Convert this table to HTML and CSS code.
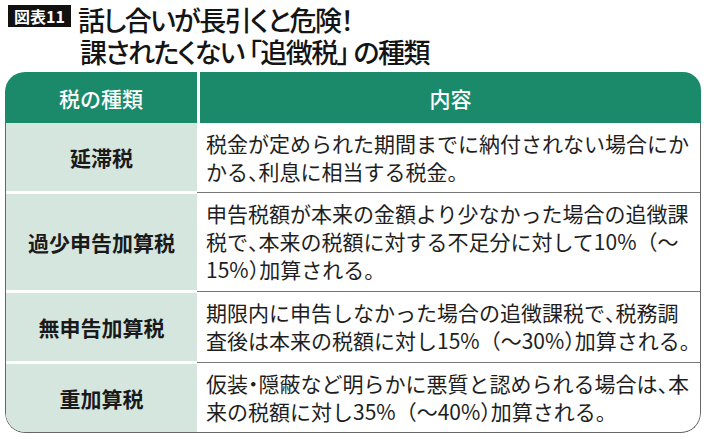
FILE: index.html
```html
<!DOCTYPE html>
<html lang="ja">
<head>
<meta charset="utf-8">
<title>図表11 追徴税の種類</title>
<link rel="stylesheet" href="styles.css">
</head>
<body>
<div class="page">
  <header class="title">
    <span class="tag">図表11</span>
    <h1 class="heading"><span>話し合いが長引くと危険！</span><span>課されたくない 「追徴税」 の種類</span></h1>
  </header>
  <div class="table">
    <div class="thead">
      <div class="th">税の種類</div>
      <div class="th">内容</div>
    </div>
    <div class="tbody">
      <div class="row">
        <div class="kind">延滞税</div>
        <div class="desc"><span class="ln">税金が定められた期間までに納付されない場合にか</span><span class="ln">かる<span class="p">、</span>利息に相当する税金。</span></div>
      </div>
      <div class="row">
        <div class="kind">過少申告加算税</div>
        <div class="desc"><span class="ln">申告税額が本来の金額より少なかった場合の追徴課</span><span class="ln">税で<span class="p">、</span>本来の税額に対する不足分に対して10%（～</span><span class="ln">15%<span class="p">）</span>加算される。</span></div>
      </div>
      <div class="row">
        <div class="kind">無申告加算税</div>
        <div class="desc"><span class="ln">期限内に申告しなかった場合の追徴課税で<span class="p">、</span>税務調</span><span class="ln">査後は本来の税額に対し15%（～30%<span class="p">）</span>加算される。</span></div>
      </div>
      <div class="row">
        <div class="kind">重加算税</div>
        <div class="desc"><span class="ln">仮装<span class="p">・</span>隠蔽など明らかに悪質と認められる場合は<span class="p">、</span>本</span><span class="ln">来の税額に対し35%（～40%<span class="p">）</span>加算される。</span></div>
      </div>
    </div>
  </div>
</div>
</body>
</html>
```

FILE: styles.css
```css
html, body {
  margin: 0;
  padding: 0;
  background: #ffffff;
}

body {
  font-family: "Noto Sans CJK JP", "Noto Sans", sans-serif;
  color: #1e1e1e;
}

.page {
  width: 710px;
  box-sizing: border-box;
  padding: 4px 9px 0 5px;
}

.title {
  display: flex;
  align-items: flex-start;
  gap: 7px;
  height: 68px;
  padding-left: 3px;
}

.tag {
  background: #111111;
  color: #ffffff;
  font-size: 16px;
  font-weight: 700;
  line-height: 22px;
  padding: 0 6px;
  margin-top: 1px;
  white-space: nowrap;
}

.heading {
  margin: 0;
  display: flex;
  flex-direction: column;
  font-size: 27px;
  font-weight: 500;
  line-height: 32px;
  letter-spacing: -1.5px;
  font-feature-settings: "palt";
  color: #141414;
  white-space: nowrap;
}

.heading span + span {
  padding-left: 2px;
}

.table {
  border-radius: 20px 18px 20px 20px;
  overflow: hidden;
}

.thead {
  display: grid;
  grid-template-columns: 192px 1fr;
  column-gap: 3px;
  height: 51px;
  background: #ffffff;
}

.th {
  background: #1b8a6b;
  color: #ffffff;
  font-size: 21px;
  font-weight: 500;
  display: flex;
  align-items: center;
  justify-content: center;
}

.tbody {
  border: 1px solid #666666;
  border-top: none;
  border-radius: 0 0 20px 20px;
  overflow: hidden;
}

.row {
  display: grid;
  grid-template-columns: 191px 1fr;
}

.kind {
  background: #d5e6df;
  font-size: 21px;
  font-weight: 700;
  color: #1a1a1a;
  display: flex;
  align-items: center;
  justify-content: center;
  white-space: nowrap;
}

.desc {
  font-size: 21px;
  line-height: 28px;
  padding: 6px 6px 6px 9px;
  display: flex;
  flex-direction: column;
}

.ln {
  white-space: nowrap;
}

.p {
  font-feature-settings: "halt";
}

.row + .row .kind {
  border-top: 3px solid #ffffff;
}

.row + .row .desc {
  border-top: 1px solid #777777;
  margin: 1px 0;
}
```
